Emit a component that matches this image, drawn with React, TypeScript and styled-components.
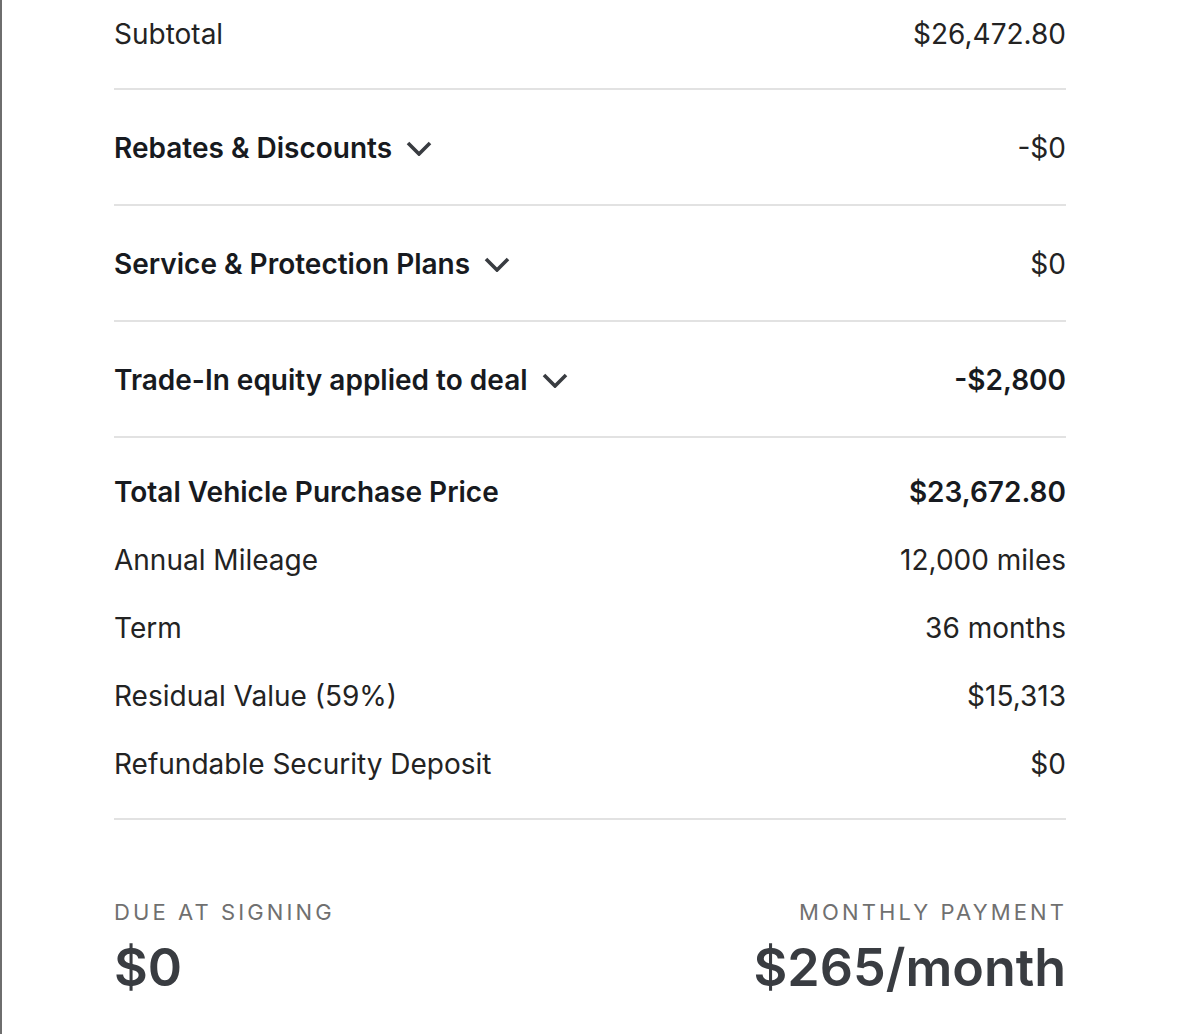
import React from "react";
import styled, { createGlobalStyle } from "styled-components";

const Global = createGlobalStyle`
  html, body { margin: 0; padding: 0; background: #ffffff; }
  body { font-family: Inter, "Noto Sans", "Liberation Sans", sans-serif; -webkit-font-smoothing: antialiased; }
`;

const Page = styled.div`
  min-height: 1034px;
  border-left: 2px solid #6e6e6e;
  box-sizing: border-box;
  display: flex;
  justify-content: center;
`;

const Summary = styled.div`
  width: 952px;
  display: flex;
  flex-direction: column;
`;

const Section = styled.div<{ $top: number; $bottom: number; $gap?: number; $border?: boolean }>`
  display: flex;
  flex-direction: column;
  gap: ${(p) => p.$gap ?? 0}px;
  padding: ${(p) => p.$top}px 0 ${(p) => p.$bottom}px;
  border-bottom: ${(p) => (p.$border ? "2px solid #e2e2e2" : "none")};
`;

const Row = styled.div`
  display: flex;
  justify-content: space-between;
  align-items: center;
  height: 36px;
  font-size: 28px;
  line-height: 36px;
  color: #232323;
`;

const Label = styled.span<{ $strong?: boolean }>`
  display: inline-flex;
  align-items: center;
  gap: 14px;
  font-weight: ${(p) => (p.$strong ? 600 : 400)};
  color: ${(p) => (p.$strong ? "#171a20" : "#232323")};
`;

const Value = styled.span<{ $strong?: boolean }>`
  font-weight: ${(p) => (p.$strong ? 600 : 400)};
  color: ${(p) => (p.$strong ? "#171a20" : "#232323")};
`;

const Totals = styled.div`
  display: flex;
  justify-content: space-between;
  padding: 78px 0 0;
`;

const TotalBlock = styled.div<{ $right?: boolean }>`
  display: flex;
  flex-direction: column;
  align-items: ${(p) => (p.$right ? "flex-end" : "flex-start")};
  gap: 12px;
`;

const Caption = styled.div`
  font-size: 22px;
  line-height: 28px;
  letter-spacing: 3.1px;
  color: #707070;
  margin-right: -1px;
`;

const Big = styled.div`
  font-size: 52px;
  line-height: 60px;
  font-weight: 600;
  color: #393c41;
`;

const Chevron = () => (
  <svg width="26" height="16" viewBox="0 0 26 16" fill="none">
    <path d="M2 3 L13 14 L24 3" stroke="#393c41" strokeWidth="3.6" strokeLinecap="butt" strokeLinejoin="miter" />
  </svg>
);

export default function App() {
  return (
    <>
      <Global />
      <Page>
        <Summary>
          <Section $top={16} $bottom={36} $border>
            <Row>
              <Label>Subtotal</Label>
              <Value>$26,472.80</Value>
            </Row>
          </Section>
          <Section $top={40} $bottom={38} $border>
            <Row>
              <Label $strong>Rebates &amp; Discounts <Chevron /></Label>
              <Value>-$0</Value>
            </Row>
          </Section>
          <Section $top={40} $bottom={38} $border>
            <Row>
              <Label $strong>Service &amp; Protection Plans <Chevron /></Label>
              <Value>$0</Value>
            </Row>
          </Section>
          <Section $top={40} $bottom={38} $border>
            <Row>
              <Label $strong>Trade-In equity applied to deal <Chevron /></Label>
              <Value $strong>-$2,800</Value>
            </Row>
          </Section>
          <Section $top={36} $bottom={36} $gap={32} $border>
            <Row>
              <Label $strong>Total Vehicle Purchase Price</Label>
              <Value $strong>$23,672.80</Value>
            </Row>
            <Row>
              <Label>Annual Mileage</Label>
              <Value>12,000 miles</Value>
            </Row>
            <Row>
              <Label>Term</Label>
              <Value>36 months</Value>
            </Row>
            <Row>
              <Label>Residual Value (59%)</Label>
              <Value>$15,313</Value>
            </Row>
            <Row>
              <Label>Refundable Security Deposit</Label>
              <Value>$0</Value>
            </Row>
          </Section>
          <Totals>
            <TotalBlock>
              <Caption>DUE AT SIGNING</Caption>
              <Big>$0</Big>
            </TotalBlock>
            <TotalBlock $right>
              <Caption>MONTHLY PAYMENT</Caption>
              <Big>$265/month</Big>
            </TotalBlock>
          </Totals>
        </Summary>
      </Page>
    </>
  );
}
